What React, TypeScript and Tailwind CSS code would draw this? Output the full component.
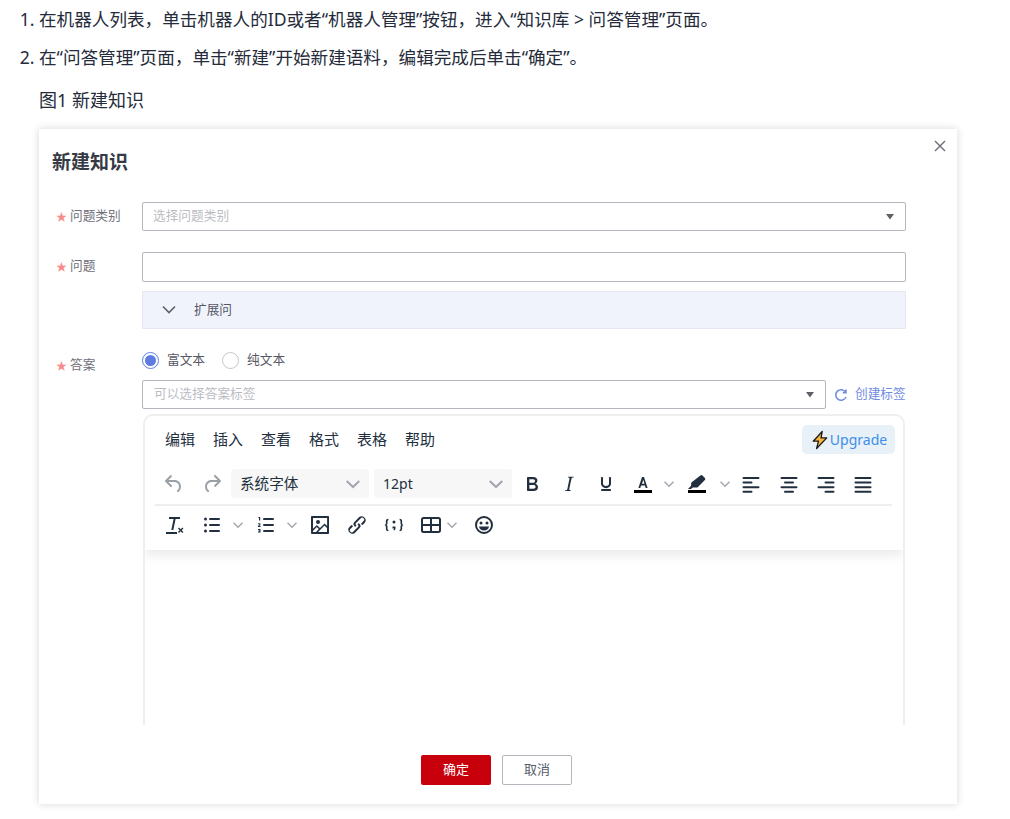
import type { ReactNode } from 'react'

const FONT = '"Noto Sans", "Noto Sans CJK SC", sans-serif'

function Icon({ children, className = 'w-6 h-6' }: { children: ReactNode; className?: string }) {
  return (
    <svg viewBox="0 0 24 24" className={className} fill="#222f3e">
      {children}
    </svg>
  )
}

function Chevron({ className = '' }: { className?: string }) {
  return (
    <svg viewBox="0 0 10 10" className={`w-[10px] h-[10px] ${className}`} fill="none" stroke="#a3a8ae" strokeWidth="1.5">
      <path d="M0.5 2.8 5 7.2 9.5 2.8" />
    </svg>
  )
}

function Caret() {
  return (
    <svg viewBox="0 0 8 6" className="w-2 h-[6px]">
      <path d="M0 0h8L4 5.500Z" fill="#5f6068" />
    </svg>
  )
}

function Tool({ className, children }: { className: string; children: ReactNode }) {
  return <div className={`flex items-center justify-center h-7 shrink-0 ${className}`}>{children}</div>
}

function Label({ text, className = '' }: { text: string; className?: string }) {
  return (
    <div className={`w-[103px] shrink-0 pl-[17px] flex items-center gap-[3px] text-[12.7px] text-[#70707a] ${className}`}>
      <span className="text-[11px] text-[#f78b8b] leading-none">★</span>
      <span className="-mt-px">{text}</span>
    </div>
  )
}

function Lines({ rows }: { rows: [number, number][] }) {
  return (
    <Icon>
      {rows.map(([x, w], i) => (
        <rect key={i} x={x} y={5 + i * 4.6} width={w} height="2" rx="1" />
      ))}
    </Icon>
  )
}

export default function App() {
  return (
    <div className="min-h-[819px] bg-white text-[#252b3a] pt-[7px]" style={{ fontFamily: FONT }}>
      <ol className="list-decimal pl-[39px] text-[17.6px] leading-6">
        <li>在机器人列表，单击机器人的ID或者“机器人管理”按钮，进入“知识库 &gt; 问答管理”页面。</li>
        <li className="mt-[14px]">在“问答管理”页面，单击“新建”开始新建语料，编辑完成后单击“确定”。</li>
      </ol>
      <p className="mt-[19px] ml-[39px] text-[18px] leading-6">图1 新建知识</p>

      <div className="relative mt-[17px] ml-[39px] w-[918px] h-[675px] bg-white shadow-[0_0_8px_rgba(0,0,0,0.16)]">
        <button className="absolute top-[10px] right-[10px] w-[14px] h-[14px]">
          <svg viewBox="0 0 14 14" className="w-[14px] h-[14px]" fill="none" stroke="#73747e" strokeWidth="1.5">
            <path d="M2 2l10 10M12 2 2 12" />
          </svg>
        </button>

        <h2 className="pt-[21px] pl-[13px] text-[19px] leading-6 font-bold text-[#363a45]">新建知识</h2>

        <div className="mt-[28px] pr-[51px] flex flex-col">
          <div className="flex items-center">
            <Label text="问题类别" />
            <div className="flex-1 h-[29px] border border-[#b4b5bd] rounded-[2px] flex items-center justify-between pl-[10px] pr-[11px] text-[12.7px] text-[#bbbcc3]">
              <span className="-mt-[2px]">选择问题类别</span>
              <Caret />
            </div>
          </div>

          <div className="flex items-center mt-[21px]">
            <Label text="问题" className="-mt-[1px]" />
            <div className="flex-1 h-[30px] border border-[#b4b5bd] rounded-[2px]" />
          </div>

          <div className="ml-[103px] mt-[9px] h-[38px] bg-[#f0f3fc] border border-[#e5e8f0] rounded-[1px] flex items-center pl-[19px] text-[12.7px] text-[#565864]">
            <svg viewBox="0 0 14 10" className="w-[14px] h-[10px]" fill="none" stroke="#5b5d68" strokeWidth="1.6">
              <path d="M1 1.500 7 7.500 13 1.500" />
            </svg>
            <span className="ml-[18px] -mt-px">扩展问</span>
          </div>

          <div className="flex mt-[21px]">
            <Label text="答案" className="h-[30px]" />
            <div className="flex-1 min-w-0">
              <div className="h-5 flex items-center text-[12.7px] text-[#565864]">
                <span className="w-[17px] h-[17px] rounded-full border border-[#5e7ce0] flex items-center justify-center">
                  <span className="w-[11px] h-[11px] rounded-full bg-[#5e7ce0]" />
                </span>
                <span className="ml-[8px] -mt-px">富文本</span>
                <span className="ml-[17px] w-[17px] h-[17px] rounded-full border border-[#c4c5cc]" />
                <span className="ml-[8px] -mt-px">纯文本</span>
              </div>

              <div className="mt-[10px] flex items-center">
                <div className="w-[684px] h-[29px] border border-[#b4b5bd] rounded-[2px] flex items-center justify-between pl-[11px] pr-[11px] text-[12.7px] text-[#bbbcc3]">
                  <span className="-mt-px">可以选择答案标签</span>
                  <Caret />
                </div>
                <svg viewBox="0 0 14 14" className="ml-[8px] w-[14px] h-[14px]" fill="none" stroke="#6f8ae2" strokeWidth="1.5">
                  <path d="M11.600 4.200A5.300 5.300 0 1 0 12 9" />
                  <path d="M12 1.500v3.200H8.800" />
                </svg>
                <span className="ml-[7px] -mt-px text-[12.7px] text-[#6f8ae2] whitespace-nowrap">创建标签</span>
              </div>

              <div className="ml-px mt-[5px] w-[762px] h-[311px] border-2 border-b-0 border-[#eeeeee] rounded-t-[10px] overflow-hidden">
                <div className="pt-[9px] pl-[10px] pr-2 pb-[11px] shadow-[0_6px_10px_rgba(0,0,0,0.08)]">
                  <div className="h-[29px] flex items-center justify-between">
                    <div className="flex gap-[18px] pl-[10px] text-[15px] text-[#222f3e]">
                      <span>编辑</span>
                      <span>插入</span>
                      <span>查看</span>
                      <span>格式</span>
                      <span>表格</span>
                      <span>帮助</span>
                    </div>
                    <div className="w-[93px] h-[29px] rounded-[5px] bg-[#e8f1f8] flex items-center justify-center text-[14px]">
                      <svg viewBox="0 0 20 20" className="w-5 h-5">
                        <path d="M12.200 1.500 3.200 11.200h5.300L6.600 18.500l10.200-10.600h-5.700l1.100-6.400Z" fill="#f6b73c" stroke="#1a1a1a" strokeWidth="1.300" strokeLinejoin="round" />
                      </svg>
                      <span className="text-[#3f8fe8]">Upgrade</span>
                    </div>
                  </div>

                  <div className="mt-[15px] h-[29px] flex items-center">
                    <Tool className="w-[38px]">
                      <Icon>
                        <path fill="#9aa0a7" d="M6.400 8H12c3.700 0 6.200 2 6.800 5.100.6 2.700-.4 5.600-2.300 6.800a1 1 0 0 1-1-1.800c1.100-.6 1.800-2.700 1.400-4.600-.5-2.100-2.100-3.500-4.900-3.500H6.400l3.300 3.300a1 1 0 1 1-1.400 1.400l-5-5a1 1 0 0 1 0-1.400l5-5a1 1 0 0 1 1.400 1.400L6.400 8Z" />
                      </Icon>
                    </Tool>
                    <Tool className="w-[38px]">
                      <Icon>
                        <path fill="#9aa0a7" d="M17.600 10H12c-2.800 0-4.400 1.400-4.900 3.500-.4 2 .3 4 1.400 4.600a1 1 0 1 1-1 1.800c-2-1.200-2.900-4.100-2.300-6.800.6-3 3-5.100 6.800-5.100h5.600l-3.300-3.300a1 1 0 1 1 1.400-1.400l5 5a1 1 0 0 1 0 1.400l-5 5a1 1 0 0 1-1.400-1.400l3.300-3.300Z" />
                      </Icon>
                    </Tool>
                    <div className="w-[138px] h-[29px] shrink-0 rounded-[3px] bg-[#f7f7f7] flex items-center justify-between pl-[9px] pr-[9px] text-[14.6px] text-[#222f3e]">
                      <span>系统字体</span>
                      <Chevron className="w-[14px] h-[14px]" />
                    </div>
                    <div className="ml-[5px] w-[138px] h-[29px] shrink-0 rounded-[3px] bg-[#f7f7f7] flex items-center justify-between pl-[9px] pr-[9px] text-[14px] text-[#222f3e]">
                      <span>12pt</span>
                      <Chevron className="w-[14px] h-[14px]" />
                    </div>
                    <Tool className="ml-px w-[37px]">
                      <Icon>
                        <path d="M7.800 19c-.3 0-.5 0-.6-.2l-.2-.5V5.700c0-.2 0-.4.2-.5l.6-.2h5c1.500 0 2.700.3 3.500 1 .7.6 1.100 1.400 1.100 2.500a3 3 0 0 1-.6 1.900c-.4.6-1 1-1.600 1.200.4.100.9.300 1.300.6s.8.700 1 1.200c.4.400.5 1 .5 1.600 0 1.300-.4 2.300-1.300 3-.8.700-2.100 1-3.800 1H7.800Zm5-8.300c.6 0 1.200-.1 1.600-.5.4-.3.6-.7.6-1.300 0-1.100-.8-1.700-2.300-1.700H9.300v3.500h3.400Zm.5 6c.7 0 1.300-.1 1.700-.4.4-.4.6-.9.6-1.500s-.2-1-.7-1.400c-.4-.3-1-.4-2-.4H9.400v3.800h4Z" />
                      </Icon>
                    </Tool>
                    <Tool className="w-[37px]">
                      <Icon>
                        <path d="m16.700 4.700-.1.900h-.3c-.6 0-1 0-1.400.3-.3.3-.4.6-.5 1.100l-2.100 9.800v.6c0 .5.400.8 1.400.8h.2l-.2.8H8l.2-.8h.2c1.100 0 1.800-.5 2-1.500l2-9.800.1-.5c0-.6-.4-.8-1.400-.8h-.3l.2-.9h5.800Z" />
                      </Icon>
                    </Tool>
                    <Tool className="w-[37px]">
                      <Icon>
                        <path d="M16 5c.6 0 1 .4 1 1v5.500a4 4 0 0 1-.4 1.800l-1 1.400a5.300 5.300 0 0 1-5.500 1 5 5 0 0 1-1.600-1c-.5-.4-.8-.9-1.100-1.400a4 4 0 0 1-.4-1.800V6c0-.6.400-1 1-1s1 .4 1 1v5.500c0 .3 0 .6.200 1l.6.700a3.300 3.300 0 0 0 2.200.8 3.400 3.400 0 0 0 2.200-.8c.3-.2.400-.5.600-.8l.2-.9V6c0-.6.400-1 1-1ZM8 17h8c.6 0 1 .4 1 1s-.4 1-1 1H8a1 1 0 0 1 0-2Z" />
                      </Icon>
                    </Tool>
                    <Tool className="w-[38px]">
                      <Icon>
                        <path d="M3 18h18v3H3z" fill="#000" />
                        <path d="M7.400 16 11 5h2l3.600 11h-1.900l-.8-2.600h-3.800L9.300 16H7.400Zm3.600-4.200h2.500L12.300 7.700 11 11.800Z" />
                      </Icon>
                    </Tool>
                    <Tool className="w-[14px]">
                      <Chevron className="w-3 h-3" />
                    </Tool>
                    <Tool className="w-[42px]">
                      <Icon>
                        <path d="M3 18h18v3H3z" fill="#000" />
                        <path d="M15.400 3.600a1.500 1.500 0 0 1 2.100 0l2.400 2.300a1.500 1.500 0 0 1 0 2.100l-6.900 6.900a2 2 0 0 1-1.400.6H7.800L6 17H3l3.100-3.200v-2.100c0-.5.200-1 .6-1.400l8.700-6.700Z" />
                      </Icon>
                    </Tool>
                    <Tool className="w-[14px]">
                      <Chevron className="w-3 h-3" />
                    </Tool>
                    <Tool className="w-[38px]">
                      <Lines rows={[[3.500, 17], [3.500, 10], [3.500, 17], [3.500, 10]]} />
                    </Tool>
                    <Tool className="w-[37px]">
                      <Lines rows={[[3.500, 17], [7, 10], [3.500, 17], [7, 10]]} />
                    </Tool>
                    <Tool className="w-[37px]">
                      <Lines rows={[[3.500, 17], [10.500, 10], [3.500, 17], [10.500, 10]]} />
                    </Tool>
                    <Tool className="w-[37px]">
                      <Lines rows={[[3.500, 17], [3.500, 17], [3.500, 17], [3.500, 17]]} />
                    </Tool>
                  </div>

                  <div className="mt-[6px] mr-[3px] h-[2px] bg-[#eeeeee]" />

                  <div className="mt-[5px] h-7 flex items-center">
                    <Tool className="w-[38px]">
                      <Icon>
                        <path d="M7 4h11v2h-4.400l-2.300 11h-2L11.600 6H7z" />
                        <path d="M4 19h11v2H4z" />
                        <path d="m16 15.600 1-1 1.700 1.700 1.700-1.700 1 1-1.700 1.700 1.700 1.700-1 1-1.700-1.700-1.700 1.700-1-1 1.700-1.700z" />
                      </Icon>
                    </Tool>
                    <Tool className="w-[38px]">
                      <Icon>
                        <circle cx="5.500" cy="6" r="1.500" />
                        <circle cx="5.500" cy="12" r="1.500" />
                        <circle cx="5.500" cy="18" r="1.500" />
                        <rect x="9" y="5" width="11" height="2" rx="1" />
                        <rect x="9" y="11" width="11" height="2" rx="1" />
                        <rect x="9" y="17" width="11" height="2" rx="1" />
                      </Icon>
                    </Tool>
                    <Tool className="w-[14px]">
                      <Chevron className="w-3 h-3" />
                    </Tool>
                    <Tool className="ml-[2px] w-[38px]">
                      <Icon>
                        <rect x="9" y="5" width="11" height="2" rx="1" />
                        <rect x="9" y="11" width="11" height="2" rx="1" />
                        <rect x="9" y="17" width="11" height="2" rx="1" />
                        <path d="M5 4h1.200v3.500H5V5H4.300V4.300zM4 10.500c.6-.5 2.700-.7 2.500.8 0 .7-.8 1-1.300 1.500h1.300V14H4v-1c.5-.7 1.400-1 1.400-1.500 0-.4-.8-.2-1.300 0zM4 16h2.500v3.500H4v-.9h1.400v-.4H4.500v-.8h.9v-.4H4z" />
                      </Icon>
                    </Tool>
                    <Tool className="w-[14px]">
                      <Chevron className="w-3 h-3" />
                    </Tool>
                    <Tool className="ml-[2px] w-[38px]">
                      <Icon>
                        <path d="M5 15.700l3.300-3.200c.3-.3.700-.3 1 0L12 15l4.100-4c.3-.4.800-.4 1 0l2 1.900V5H5v10.700zM5 18v1h3l2.800-2.900-2-2L5 17.900zm14-3l-2.500-2.400-6.400 6.500H19v-4zM4 3h16c.6 0 1 .4 1 1v16c0 .6-.4 1-1 1H4a1 1 0 0 1-1-1V4c0-.6.400-1 1-1zm6 8a2 2 0 1 0 0-4 2 2 0 0 0 0 4z" />
                      </Icon>
                    </Tool>
                    <Tool className="-ml-px w-[37px]">
                      <Icon>
                        <path d="M6.200 12.300a1 1 0 0 1 1.400 1.400l-2 2a2 2 0 1 0 2.800 2.800l4.800-4.800a1 1 0 0 0 0-1.400 1 1 0 1 1 1.400-1.300 2.900 2.900 0 0 1 0 4.100l-4.800 4.800a4 4 0 0 1-5.600-5.600l2-2zm11.600-.6a1 1 0 0 1-1.400-1.400l2-2a2 2 0 1 0-2.800-2.800L10.800 10.300a1 1 0 0 0 0 1.400 1 1 0 1 1-1.400 1.300 2.900 2.900 0 0 1 0-4.100l4.800-4.800a4 4 0 0 1 5.600 5.600l-2 2z" />
                      </Icon>
                    </Tool>
                    <Tool className="w-[37px]">
                      <Icon className="w-[30px] h-[30px]">
                        <path d="M7.500 7c-1.500 0-2 .8-2 2v1.500c0 .8-.5 1.200-1.200 1.500.7.300 1.200.7 1.200 1.500V15c0 1.200.5 2 2 2v-1.200c-.5 0-.7-.3-.7-.9v-1.700c0-.6-.3-1-.8-1.200.5-.2.800-.6.800-1.200V9.100c0-.6.200-.9.700-.9V7ZM16.500 7c1.500 0 2 .8 2 2v1.500c0 .8.500 1.200 1.200 1.500-.7.300-1.200.7-1.200 1.500V15c0 1.200-.5 2-2 2v-1.200c.5 0 .7-.3.7-.9v-1.700c0-.6.300-1 .8-1.200-.5-.2-.8-.6-.8-1.200V9.100c0-.6-.2-.9-.7-.9V7Z" />
                        <circle cx="12" cy="9.500" r="1.200" />
                        <path d="M10.800 13.200h2.400v1.300c0 .9-.5 1.500-1.300 1.800l-.3-.7c.3-.2.500-.4.500-.8h-1.300z" />
                      </Icon>
                    </Tool>
                    <Tool className="-mr-[5px] w-[38px]">
                      <Icon>
                        <path fillRule="evenodd" d="M4.500 4h15c1.400 0 2.500 1.100 2.500 2.500v11c0 1.400-1.100 2.500-2.500 2.500h-15A2.500 2.500 0 0 1 2 17.500v-11C2 5.100 3.100 4 4.500 4ZM4 11h7V6H4.500l-.5.500V11Zm9 0h7V6.500l-.5-.5H13v5Zm-9 2v4.500l.5.500H11v-5H4Zm9 0v5h6.500l.5-.5V13h-7Z" />
                      </Icon>
                    </Tool>
                    <Tool className="w-[14px]">
                      <Chevron className="w-3 h-3" />
                    </Tool>
                    <Tool className="ml-[6px] w-[38px]">
                      <Icon>
                        <path fillRule="evenodd" d="M12 3a9 9 0 1 1 0 18 9 9 0 0 1 0-18Zm0 2a7 7 0 1 0 0 14 7 7 0 0 0 0-14Z" />
                        <circle cx="9" cy="10" r="1.500" />
                        <circle cx="15" cy="10" r="1.500" />
                        <path d="M7 13.500h10c-.4 2.500-2.400 4-5 4s-4.600-1.500-5-4Z" />
                      </Icon>
                    </Tool>
                  </div>
                </div>
              </div>
            </div>
          </div>
        </div>

        <div className="mt-[30px] pr-[3px] flex justify-center gap-[11px] text-[13px]">
          <button className="w-[70px] h-[30px] rounded-[2px] bg-[#c7000b] text-white">确定</button>
          <button className="w-[70px] h-[30px] rounded-[2px] border border-[#b4b5bd] bg-white text-[#575d6c]">取消</button>
        </div>
      </div>
    </div>
  )
}
